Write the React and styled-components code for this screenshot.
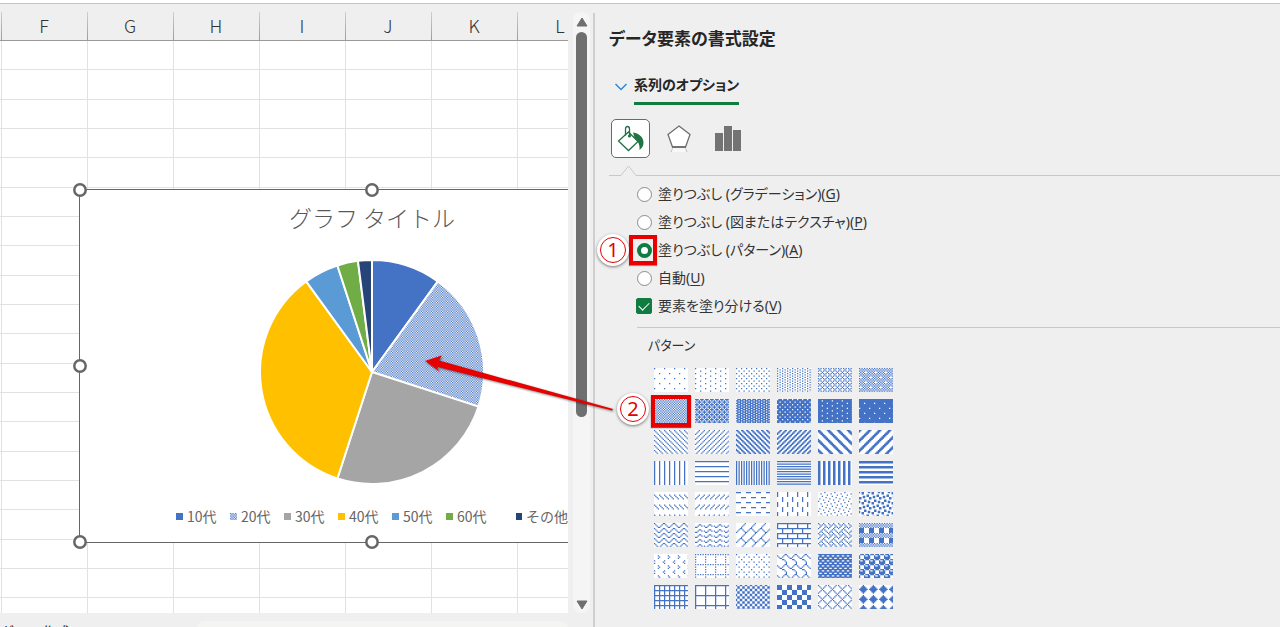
import { useState } from 'react';
import styled, { createGlobalStyle, css } from 'styled-components';

const columns = 'FGHIJKL'.split('');
const rows = Array.from({ length: 60 }, (_, i) => i);

const slices = [
  { name: '10代', value: 10, color: '#4472c4' },
  { name: '20代', value: 20, color: 'url(#half)' },
  { name: '30代', value: 25, color: '#a5a5a5' },
  { name: '40代', value: 35, color: '#ffc000' },
  { name: '50代', value: 5, color: '#5b9bd5' },
  { name: '60代', value: 3, color: '#70ad47' },
  { name: 'その他', value: 2, color: '#264478' },
];

// one byte per row, 8x8 tiles
const patterns = [
  ['5%', '8000000008000000'],
  ['10%', '8000080080000800'],
  ['20%', '8800220088002200'],
  ['25%', '8822882288228822'],
  ['30%', 'aa44aa11aa44aa11'],
  ['40%', 'aa55aa51aa55aa15'],
  ['50%', 'aa55aa55aa55aa55'],
  ['60%', 'ee55bb55ee55bb55'],
  ['70%', '77dd77dd77dd77dd'],
  ['75%', '77ffddff77ffddff'],
  ['80%', 'ffeffffeffeffffe'],
  ['90%', 'fffffff7ffffff7f'],
  ['右下がり対角線', '8844221188442211'],
  ['右上がり対角線', '1122448811224488'],
  ['右下がり対角線 (太)', 'cc663399cc663399'],
  ['右上がり対角線 (太)', '3366cc993366cc99'],
  ['右下がり対角線 (幅広)', 'c1e070381c0e0783'],
  ['右上がり対角線 (幅広)', 'c183070e1c3870e0'],
  ['縦線', '8888888888888888'],
  ['横線', 'ff000000ff000000'],
  ['縦線 (細)', 'aaaaaaaaaaaaaaaa'],
  ['横線 (細)', 'ff00ff00ff00ff00'],
  ['縦線 (太)', 'cccccccccccccccc'],
  ['横線 (太)', 'ffff0000ffff0000'],
  ['右下がり破線', '0000884422110000'],
  ['右上がり破線', '0000112244880000'],
  ['横破線', 'f00000000f000000'],
  ['縦破線', '8080808008080808'],
  ['紙ふぶき (小)', '0420011002400880'],
  ['紙ふぶき (大)', 'b130031bd8c00c8d'],
  ['ジグザグ', '8142241881422418'],
  ['波線', '001825c0001825c0'],
  ['レンガ (斜め)', '0102040818244281'],
  ['レンガ (横)', 'ff808080ff080808'],
  ['網目', '8854224588142251'],
  ['格子縞', 'aa55aa55f0f0f0f0'],
  ['切り込み', '0010081000800180'],
  ['点線グリッド', 'aa00800080008000'],
  ['点線格子', '8000220008002200'],
  ['うろこ', '038448300c020101'],
  ['格子', 'ff66ff99ff66ff99'],
  ['球', '77898f8f7798f8f8'],
  ['グリッド (小)', 'ff888888ff888888'],
  ['グリッド (大)', 'ff80808080808080'],
  ['市松模様 (小)', '9966669999666699'],
  ['市松模様 (大)', 'f0f0f0f00f0f0f0f'],
  ['ひし形 (枠)', '8244281028448201'],
  ['ひし形 (塗り)', '10387cfe7c381000'],
];

function patternPath(hex) {
  let d = '';
  for (let y = 0; y < 20; y++) {
    const byte = parseInt(hex.substr((y % 8) * 2, 2), 16);
    for (let x = 0; x < 28; x++) {
      if (byte & (0x80 >> x % 8)) d += `M${x} ${y}h1v1h-1z`;
    }
  }
  return d;
}

function Pie() {
  const r = 112;
  let sum = 0;
  const point = (v) => {
    const a = (v / 100) * Math.PI * 2;
    return `${(r * Math.sin(a)).toFixed(2)} ${(-r * Math.cos(a)).toFixed(2)}`;
  };
  return (
    <svg width="228" height="228" viewBox="-114 -114 228 228" aria-hidden="true">
      <defs>
        <pattern id="half" width="2.5" height="2.5" patternUnits="userSpaceOnUse">
          <rect width="2.5" height="2.5" fill="#fff" />
          <path d="M0 0h1.25v1.25H0zM1.25 1.25h1.25v1.25H1.25z" fill="#4472c4" />
        </pattern>
      </defs>
      {slices.map((s) => {
        const from = point(sum);
        sum += s.value;
        return (
          <path
            key={s.name}
            d={`M0 0L${from}A${r} ${r} 0 0 1 ${point(sum)}Z`}
            fill={s.color}
            stroke="#fff"
            strokeWidth="2"
            strokeLinejoin="round"
          />
        );
      })}
    </svg>
  );
}

function Handle({ x, y }) {
  return (
    <HandleDot $x={x} $y={y} viewBox="0 0 14 14" aria-hidden="true">
      <circle cx="7" cy="7" r="5.7" fill="#fff" stroke="#666" strokeWidth="2.5" />
    </HandleDot>
  );
}

function Sheet() {
  return (
    <SheetArea>
      <Grid>
        <thead>
          <tr>
            <EdgeHead />
            {columns.map((c) => (
              <ColHead key={c} scope="col">{c}</ColHead>
            ))}
            <RestHead />
          </tr>
        </thead>
        <tbody>
          {rows.map((r) => (
            <Row key={r}>
              <Cell />
              {columns.map((c) => <Cell key={c} />)}
              <Cell />
            </Row>
          ))}
        </tbody>
      </Grid>
      <Chart>
        <ChartTitle>グラフ タイトル</ChartTitle>
        <Pie />
        <Legend>
          {slices.map((s, i) => (
            <LegendItem key={s.name} $last={i === slices.length - 1}>
              <svg width="7" height="7" aria-hidden="true">
                <rect width="7" height="7" fill={s.color} />
              </svg>
              {s.name}
            </LegendItem>
          ))}
        </Legend>
        <Handle x="0%" y="0%" />
        <Handle x="50%" y="0%" />
        <Handle x="0%" y="50%" />
        <Handle x="0%" y="100%" />
        <Handle x="50%" y="100%" />
      </Chart>
    </SheetArea>
  );
}

const fills = [
  { id: 'gradient', label: '塗りつぶし (グラデーション)', mnemonic: 'G' },
  { id: 'picture', label: '塗りつぶし (図またはテクスチャ)', mnemonic: 'P' },
  { id: 'pattern', label: '塗りつぶし (パターン)', mnemonic: 'A' },
  { id: 'auto', label: '自動', mnemonic: 'U' },
];

function FormatPane() {
  const [fill, setFill] = useState('pattern');
  const [vary, setVary] = useState(true);
  const [selected, setSelected] = useState('50%');

  return (
    <Pane>
      <PaneTitle>データ要素の書式設定</PaneTitle>
      <OptionTabs>
        <svg width="14" height="24" viewBox="0 0 14 24" fill="none" aria-hidden="true">
          <path d="M1.5 11l5.5 5.5 5.5-5.5" stroke="#2b88d8" strokeWidth="1.5" />
        </svg>
        <OptionTab type="button">系列のオプション</OptionTab>
      </OptionTabs>
      <IconTabs>
        <IconTab type="button" $active aria-label="塗りつぶしと線">
          <svg width="30" height="30" viewBox="0 0 30 30" fill="none" aria-hidden="true">
            <path d="M12.5 8L22 17.500 12.500 26.500 2.500 17z" stroke="#217346" strokeWidth="1.3" />
            <path d="M9.500 11.500V5q0-2.500 2-2.500t2 2.500V11" stroke="#217346" strokeWidth="1.3" />
            <circle cx="13.500" cy="12" r="1.600" fill="#217346" />
            <path d="M17 8.500c7 1 10.500 5.500 10.500 10 0 3-1 5-4 7.500 .5-5-1-8.500-5-12z" fill="#217346" />
          </svg>
        </IconTab>
        <IconTab type="button" aria-label="効果">
          <svg width="30" height="30" viewBox="0 0 30 30" fill="none" aria-hidden="true">
            <path d="M15 2L26 10.500 21.500 23H8.500L4 10.500z" fill="#fff" stroke="#6f6f6f" strokeWidth="1.3" />
            <path d="M8 23h14" stroke="#6a6a6a" strokeWidth="1.5" />
            <path d="M8.500 24.500h13l1.500 3.500H7z" fill="#f8f8f8" />
            <path d="M8.500 24.500L7 28M21.500 24.500l1.500 3.500" stroke="#bfbfbf" />
          </svg>
        </IconTab>
        <IconTab type="button" aria-label="系列のオプション">
          <svg width="30" height="30" viewBox="0 0 30 30" fill="#737373" aria-hidden="true">
            <path d="M3 9h8v18H3zM12 2h8v25h-8zM21 6h8v21h-8z" />
          </svg>
        </IconTab>
      </IconTabs>
      <Notched>
        <svg width="40" height="12" viewBox="0 0 40 12" fill="none" aria-hidden="true">
          <path d="M0 11.500h12L19.500 2 27 11.500h13" stroke="#c8c8c8" />
        </svg>
      </Notched>
      <Options>
        {fills.map((f) => (
          <Option key={f.id}>
            <Mark>
              <Radio name="fill" checked={fill === f.id} onChange={() => setFill(f.id)} />
              {f.id === 'pattern' && (
                <>
                  <RadioFrame />
                  <StepBadge $left={-39} $top={-8}>1</StepBadge>
                </>
              )}
            </Mark>
            <span>{f.label}(<u>{f.mnemonic}</u>)</span>
          </Option>
        ))}
        <Option>
          <Mark>
            <Checkbox checked={vary} onChange={(e) => setVary(e.target.checked)} />
          </Mark>
          <span>要素を塗り分ける(<u>V</u>)</span>
        </Option>
      </Options>
      <Divider />
      <PatternTitle id="pattern-title">パターン</PatternTitle>
      <Patterns role="group" aria-labelledby="pattern-title">
        {patterns.map(([name, hex]) => (
          <Swatch
            key={name}
            type="button"
            aria-label={name}
            aria-pressed={selected === name}
            onClick={() => setSelected(name)}
          >
            <svg width="34" height="24" viewBox="0 0 27.2 19.2" aria-hidden="true">
              <path d={patternPath(hex)} fill="#4472c4" />
            </svg>
            {name === '50%' && (
              <>
                <SwatchFrame />
                <StepBadge $left={-37} $top={-6}>2</StepBadge>
                <Arrow width="194" height="60" viewBox="0 0 194 60" aria-hidden="true">
                  <path d="M4 10L20.500 4.500 18 9.500 192 58 191 59.500 15 15.500 18.500 20.500z" fill="#e60000" />
                </Arrow>
              </>
            )}
          </Swatch>
        ))}
      </Patterns>
    </Pane>
  );
}

export default function App() {
  return (
    <>
      <GlobalStyle />
      <Window>
        <TopEdge />
        <Workspace>
          <Book>
            <Sheet />
            <SheetTabs>
              <span>グラフ作成</span>
              <TabTrack />
            </SheetTabs>
          </Book>
          <Scrollbar>
            <ScrollButton type="button" aria-label="上へ">
              <svg width="12" height="10" viewBox="0 0 12 10" fill="#6f6f6f" aria-hidden="true">
                <path d="M6 1L11 9H1z" stroke="#6f6f6f" strokeLinejoin="round" />
              </svg>
            </ScrollButton>
            <Thumb />
            <ScrollButton type="button" aria-label="下へ">
              <svg width="12" height="10" viewBox="0 0 12 10" fill="#6f6f6f" aria-hidden="true">
                <path d="M6 9L11 1H1z" stroke="#6f6f6f" strokeLinejoin="round" />
              </svg>
            </ScrollButton>
          </Scrollbar>
          <FormatPane />
        </Workspace>
      </Window>
    </>
  );
}

const GlobalStyle = createGlobalStyle`
  *{
    box-sizing: border-box;
  }
  body{
    margin: 0;
    background: #efefef;
    color: #262626;
    font-family: "Noto Sans CJK JP", sans-serif;
    font-size: 14px;
  }
  button{
    padding: 0;
    border: none;
    background: none;
    font: inherit;
    color: inherit;
  }
  svg{
    display: block;
  }
`;

const Window = styled.div`
  display: flex;
  flex-direction: column;
  height: 100vh;
  overflow: hidden;
`;

const TopEdge = styled.div`
  flex: none;
  height: 4px;
  background: #fff;
  border-bottom: 1px solid #c6c6c6;
`;

const Workspace = styled.main`
  flex: 1;
  min-height: 0;
  display: grid;
  grid-template-columns: minmax(0, 1fr) 25px 687px;
`;

const Book = styled.div`
  display: flex;
  flex-direction: column;
  min-height: 0;
`;

const SheetArea = styled.div`
  position: relative;
  flex: 1;
  min-height: 0;
  overflow: hidden;
`;

const Grid = styled.table`
  width: max(100%, 604px);
  table-layout: fixed;
  border-collapse: separate;
  border-spacing: 0;
  background: #fff;
`;

const ColHead = styled.th`
  width: 86px;
  height: 37px;
  padding: 6px 2px 0 0;
  border-bottom: 1px solid #999;
  background: linear-gradient(#d0d0d0, #9c9c9c) right bottom / 1px 28px no-repeat #efefef;
  font-size: 18px;
  font-weight: 300;
  line-height: 28px;
  color: #333;
`;

const EdgeHead = styled(ColHead).attrs({ as: 'td' })`
  width: 2px;
`;

const RestHead = styled(ColHead).attrs({ as: 'td' })`
  width: auto;
  padding: 0;
`;

const Cell = styled.td`
  padding: 0;
  border-right: 1px solid #e1e1e1;
  border-bottom: 1px solid #e1e1e1;
`;

const Row = styled.tr`
  height: 29px;
  &:nth-child(3n + 2){
    height: 30px;
  }
`;

const Chart = styled.div`
  position: absolute;
  left: 79px;
  top: 185px;
  width: 586px;
  height: 354px;
  display: flex;
  flex-direction: column;
  align-items: center;
  padding-top: 11px;
  background: #fff;
  border: 1px solid #666;
`;

const ChartTitle = styled.div`
  margin-bottom: 25px;
  font-size: 23px;
  font-weight: 300;
  line-height: 32px;
  color: #595959;
`;

const Legend = styled.div`
  display: flex;
  margin-top: 20px;
  line-height: 20px;
  color: #666;
`;

const LegendItem = styled.div`
  display: flex;
  align-items: center;
  gap: 4px;
  width: ${(p) => (p.$last ? '68px' : '54px')};
  padding-left: ${(p) => (p.$last ? '16px' : '0')};
  white-space: nowrap;
`;

const HandleDot = styled.svg`
  position: absolute;
  left: ${(p) => p.$x};
  top: ${(p) => p.$y};
  width: 14px;
  height: 14px;
  margin: -7px 0 0 -7px;
`;

const SheetTabs = styled.div`
  flex: none;
  display: flex;
  height: 14px;
  padding-top: 8px;
  overflow: hidden;
  line-height: 20px;
  span{
    width: 197px;
  }
`;

const TabTrack = styled.div`
  flex: 1;
  height: 20px;
  border-radius: 8px 8px 0 0;
  background: #f4f4f2;
`;

const Scrollbar = styled.div`
  display: flex;
  flex-direction: column;
  align-items: center;
  width: 17px;
  margin: 8px 4px 14px 5px;
  border-radius: 8px;
  background: #f5f5f5;
`;

const ScrollButton = styled.button`
  display: flex;
  justify-content: center;
  align-items: center;
  width: 17px;
  height: 20px;
  &:last-child{
    height: 16px;
    margin-top: auto;
  }
`;

const Thumb = styled.div`
  width: 11px;
  height: 64%;
  border-radius: 6px;
  background: #6f6f6f;
`;

const Pane = styled.aside`
  display: flex;
  flex-direction: column;
  margin-top: 9px;
  padding: 14px 0 0 14px;
  border-left: 2px solid #cfcfcf;
  font-family: "Noto Sans", "Noto Sans CJK JP", sans-serif;
  font-feature-settings: "palt";
`;

const PaneTitle = styled.h2`
  margin: 0;
  font-size: 17px;
  font-weight: 700;
  line-height: 24px;
`;

const OptionTabs = styled.div`
  display: flex;
  gap: 6px;
  margin-top: 22px;
  padding-left: 5px;
`;

const OptionTab = styled.button`
  height: 32px;
  padding: 0 0 5px;
  border-bottom: 3px solid #107c41;
  font-weight: 700;
  line-height: 24px;
`;

const IconTabs = styled.div`
  display: flex;
  gap: 9px;
  margin-top: 14px;
  padding-left: 2px;
`;

const IconTab = styled.button`
  display: flex;
  justify-content: center;
  align-items: center;
  width: 39px;
  height: 39px;
  border-radius: 5px;
  ${(p) => p.$active && css`
    background: #fff;
    border: 1px solid #6a6a6a;
  `}
`;

const Notched = styled.div`
  display: flex;
  margin-top: 6px;
  &::after{
    content: "";
    flex: 1;
    border-bottom: 1px solid #c8c8c8;
  }
`;

const Options = styled.div`
  margin-top: 4px;
  padding-left: 27px;
`;

const Option = styled.label`
  display: flex;
  align-items: center;
  gap: 6px;
  width: fit-content;
  height: 28px;
  line-height: 28px;
  color: #333;
  u{
    text-underline-offset: 2px;
  }
`;

const Mark = styled.span`
  position: relative;
  display: flex;
  justify-content: center;
  align-items: center;
  width: 16px;
  height: 16px;
`;

const Radio = styled.input.attrs({ type: 'radio' })`
  appearance: none;
  width: 15px;
  height: 15px;
  margin: 0;
  border: 1px solid #8c8c8c;
  border-radius: 50%;
  background: #fff;
  &:checked{
    border: 4px solid #107c41;
  }
`;

const Checkbox = styled.input.attrs({ type: 'checkbox' })`
  appearance: none;
  display: flex;
  justify-content: center;
  width: 16px;
  height: 16px;
  margin: 0;
  border: 1px solid #107c41;
  border-radius: 2px;
  background: #fff;
  &:checked{
    background: #107c41;
  }
  &:checked::after{
    content: "";
    width: 5px;
    height: 9px;
    margin-top: 1px;
    border: solid #fff;
    border-width: 0 1px 1px 0;
    transform: rotate(45deg);
  }
`;

const RadioFrame = styled.span`
  position: absolute;
  inset: -7px -5px -7px -7px;
  border: 4px solid #e60000;
  box-shadow: 0 1px 1px rgba(0, 0, 0, 0.4);
`;

const SwatchFrame = styled.span`
  position: absolute;
  inset: -4px -3px;
  border: 4px solid #e60000;
  box-shadow: 0 1px 1px rgba(0, 0, 0, 0.6);
`;

const StepBadge = styled.span`
  position: absolute;
  left: ${(p) => p.$left}px;
  top: ${(p) => p.$top}px;
  display: flex;
  justify-content: center;
  align-items: center;
  width: 32px;
  height: 32px;
  border: 3px solid #fff;
  border-radius: 50%;
  background: #fff;
  box-shadow: 0 1px 3px rgba(0, 0, 0, 0.5);
  color: #e60000;
  font-size: 20px;
  line-height: 20px;
  &::before{
    content: "";
    position: absolute;
    inset: 0;
    border: 1px solid #e60000;
    border-radius: 50%;
  }
`;

const Arrow = styled.svg`
  position: absolute;
  right: 73px;
  top: -48px;
  filter: drop-shadow(1px 1px 1px rgba(0, 0, 0, 0.5));
  pointer-events: none;
`;

const Divider = styled.hr`
  flex: none;
  width: calc(100% - 28px);
  height: 1px;
  margin: 7px 0 0 28px;
  border: none;
  background: #c8c8c8;
`;

const PatternTitle = styled.div`
  margin: 5px 0 11px 39px;
  font-size: 13px;
  line-height: 24px;
  color: #333;
`;

const Patterns = styled.div`
  display: grid;
  grid-template-columns: repeat(6, 34px);
  gap: 7px;
  padding-left: 45px;
`;

const Swatch = styled.button`
  position: relative;
  width: 34px;
  height: 24px;
  background: #fff;
`;
